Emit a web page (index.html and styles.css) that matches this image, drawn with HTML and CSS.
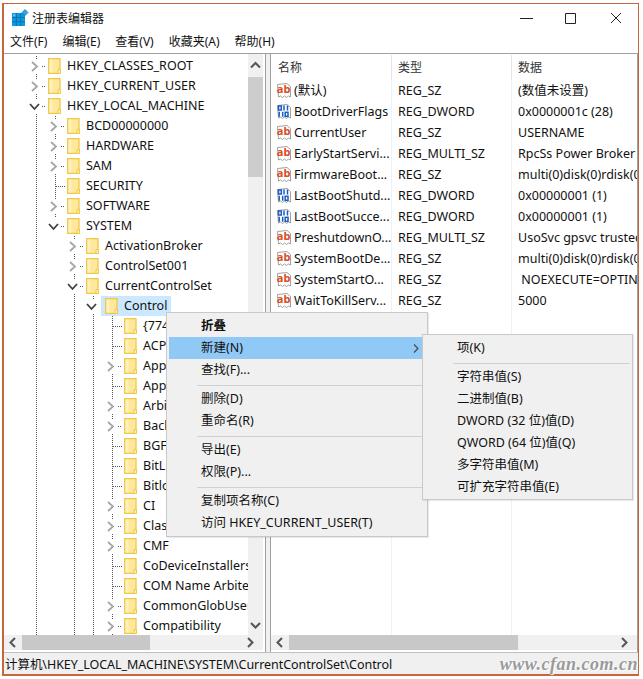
FILE: index.html
```html
<!DOCTYPE html>
<html lang="zh-CN">
<head>
<meta charset="utf-8">
<title>注册表编辑器</title>
<link rel="stylesheet" href="styles.css">
</head>
<body>
<svg class="defs" width="0" height="0" aria-hidden="true">
  <symbol id="right" viewBox="0 0 9 11"><path d="M2 1l5 4.500L2 10" fill="none" stroke="#a6a6a6" stroke-width="1.800"/></symbol>
  <symbol id="down" viewBox="0 0 11 9"><path d="M1 2l4.500 5L10 2" fill="none" stroke="#404040" stroke-width="1.800"/></symbol>
  <symbol id="folder" viewBox="0 0 13 16"><path d="M.7.700h11.300v14.600H.7z" fill="#ffe79c" stroke="#f0c848" stroke-width="1.300"/><path d="M1.500 1.500h3v13h-3z" fill="#fff0bd"/><path d="M10 11.500h2.500v4H10z" fill="#ffeeb0" stroke="#f0c848"/></symbol>
  <symbol id="ab" viewBox="0 0 16 17"><path d="M1.500 2.500L11 1.500l3.500 3V15l-2-1-2 1.500-2-1.500-2 1.500-2-1.500-2 1z" fill="#fff" stroke="#a0a0a0"/><text x=".8" y="10.800" class="abtext">ab</text></symbol>
  <symbol id="bin" viewBox="0 0 16 17"><path d="M1.500 2.500L11 1.500l3.500 3V15l-2-1-2 1.500-2-1.500-2 1.500-2-1.500-2 1z" fill="#fff" stroke="#a0a0a0"/><g fill="none" stroke="#1a5cc0" stroke-width="1.500"><rect x="2.500" y="3" width="2.800" height="4"/><path d="M8 2.500v5M11.500 2.500v5M3.200 8.800v5M6.700 8.800v5"/><rect x="9.200" y="9.300" width="2.800" height="4"/></g></symbol>
</svg>
<div class="window">
  <header class="titlebar">
    <svg class="appicon" width="18" height="18" viewBox="0 0 18 18"><path d="M1 4h13v13H1z" fill="#0a9be0"/><path d="M1 8.500h13M1 12.800h13M5.300 4v13M9.700 4v13" stroke="#0d6fae" stroke-width="1"/><path d="M2 5h2.500v2.500H2z" fill="#47c4f5"/><path d="M14 .5l3 3-3 3-3-3z" fill="#2aa7e6" stroke="#0d6fae" stroke-width=".7"/></svg>
    <span class="apptitle">注册表编辑器</span>
    <div class="caption">
      <svg class="capbtn" width="46" height="12" viewBox="0 0 46 12"><path d="M21 6.500h13" stroke="#222" stroke-width="1"/></svg>
      <svg class="capbtn" width="46" height="12" viewBox="0 0 46 12"><path d="M20.500 1.500h10v10h-10z" fill="none" stroke="#222" stroke-width="1"/></svg>
      <svg class="capbtn" width="46" height="12" viewBox="0 0 46 12"><path d="M20 1l10 10M30 1L20 11" fill="none" stroke="#222" stroke-width="1"/></svg>
    </div>
  </header>
  <nav class="menubar"><span>文件(F)</span><span>编辑(E)</span><span>查看(V)</span><span>收藏夹(A)</span><span>帮助(H)</span></nav>
  <main class="panes">
    <section class="treepane">
      <div class="treeview">
        <div class="tree">
          <div class="node"><i class="toggle line"><svg width="9" height="11"><use href="#right"/></svg><b class="hdots short"></b></i><svg class="fo" width="13" height="16"><use href="#folder"/></svg><span>HKEY_CLASSES_ROOT</span></div>
          <div class="node"><i class="toggle line"><svg width="9" height="11"><use href="#right"/></svg><b class="hdots short"></b></i><svg class="fo" width="13" height="16"><use href="#folder"/></svg><span>HKEY_CURRENT_USER</span></div>
          <div class="node"><i class="toggle line"><svg width="11" height="9"><use href="#down"/></svg><b class="hdots short"></b></i><svg class="fo" width="13" height="16"><use href="#folder"/></svg><span>HKEY_LOCAL_MACHINE</span></div>

          <div class="node"><i class="guide"></i><i class="toggle line"><svg width="9" height="11"><use href="#right"/></svg><b class="hdots short"></b></i><svg class="fo" width="13" height="16"><use href="#folder"/></svg><span>BCD00000000</span></div>
          <div class="node"><i class="guide"></i><i class="toggle line"><svg width="9" height="11"><use href="#right"/></svg><b class="hdots short"></b></i><svg class="fo" width="13" height="16"><use href="#folder"/></svg><span>HARDWARE</span></div>
          <div class="node"><i class="guide"></i><i class="toggle line"><svg width="9" height="11"><use href="#right"/></svg><b class="hdots short"></b></i><svg class="fo" width="13" height="16"><use href="#folder"/></svg><span>SAM</span></div>
          <div class="node"><i class="guide"></i><i class="toggle line"><b class="hdots"></b></i><svg class="fo" width="13" height="16"><use href="#folder"/></svg><span>SECURITY</span></div>
          <div class="node"><i class="guide"></i><i class="toggle line"><svg width="9" height="11"><use href="#right"/></svg><b class="hdots short"></b></i><svg class="fo" width="13" height="16"><use href="#folder"/></svg><span>SOFTWARE</span></div>
          <div class="node"><i class="guide"></i><i class="toggle line end"><svg width="11" height="9"><use href="#down"/></svg><b class="hdots short"></b></i><svg class="fo" width="13" height="16"><use href="#folder"/></svg><span>SYSTEM</span></div>

          <div class="node"><i class="guide"></i><i class="blank"></i><i class="toggle line"><svg width="9" height="11"><use href="#right"/></svg><b class="hdots short"></b></i><svg class="fo" width="13" height="16"><use href="#folder"/></svg><span>ActivationBroker</span></div>
          <div class="node"><i class="guide"></i><i class="blank"></i><i class="toggle line"><svg width="9" height="11"><use href="#right"/></svg><b class="hdots short"></b></i><svg class="fo" width="13" height="16"><use href="#folder"/></svg><span>ControlSet001</span></div>
          <div class="node"><i class="guide"></i><i class="blank"></i><i class="toggle line"><svg width="11" height="9"><use href="#down"/></svg><b class="hdots short"></b></i><svg class="fo" width="13" height="16"><use href="#folder"/></svg><span>CurrentControlSet</span></div>

          <div class="node"><i class="guide"></i><i class="blank"></i><i class="guide"></i><i class="toggle line"><svg width="11" height="9"><use href="#down"/></svg></i><span class="selected"><svg class="fo" width="13" height="16"><use href="#folder"/></svg><span>Control</span></span></div>

          <div class="node"><i class="guide"></i><i class="blank"></i><i class="guide"></i><i class="guide"></i><i class="toggle line"><b class="hdots"></b></i><svg class="fo" width="13" height="16"><use href="#folder"/></svg><span>{7746D80F-97E0-4E26-9543-26B41FC22F79}</span></div>
          <div class="node"><i class="guide"></i><i class="blank"></i><i class="guide"></i><i class="guide"></i><i class="toggle line"><b class="hdots"></b></i><svg class="fo" width="13" height="16"><use href="#folder"/></svg><span>ACPI</span></div>
          <div class="node"><i class="guide"></i><i class="blank"></i><i class="guide"></i><i class="guide"></i><i class="toggle line"><svg width="9" height="11"><use href="#right"/></svg><b class="hdots short"></b></i><svg class="fo" width="13" height="16"><use href="#folder"/></svg><span>AppID</span></div>
          <div class="node"><i class="guide"></i><i class="blank"></i><i class="guide"></i><i class="guide"></i><i class="toggle line"><b class="hdots"></b></i><svg class="fo" width="13" height="16"><use href="#folder"/></svg><span>AppReadiness</span></div>
          <div class="node"><i class="guide"></i><i class="blank"></i><i class="guide"></i><i class="guide"></i><i class="toggle line"><svg width="9" height="11"><use href="#right"/></svg><b class="hdots short"></b></i><svg class="fo" width="13" height="16"><use href="#folder"/></svg><span>Arbiters</span></div>
          <div class="node"><i class="guide"></i><i class="blank"></i><i class="guide"></i><i class="guide"></i><i class="toggle line"><svg width="9" height="11"><use href="#right"/></svg><b class="hdots short"></b></i><svg class="fo" width="13" height="16"><use href="#folder"/></svg><span>BackupRestore</span></div>
          <div class="node"><i class="guide"></i><i class="blank"></i><i class="guide"></i><i class="guide"></i><i class="toggle line"><b class="hdots"></b></i><svg class="fo" width="13" height="16"><use href="#folder"/></svg><span>BGFX</span></div>
          <div class="node"><i class="guide"></i><i class="blank"></i><i class="guide"></i><i class="guide"></i><i class="toggle line"><b class="hdots"></b></i><svg class="fo" width="13" height="16"><use href="#folder"/></svg><span>BitLocker</span></div>
          <div class="node"><i class="guide"></i><i class="blank"></i><i class="guide"></i><i class="guide"></i><i class="toggle line"><b class="hdots"></b></i><svg class="fo" width="13" height="16"><use href="#folder"/></svg><span>Bitlocker</span></div>
          <div class="node"><i class="guide"></i><i class="blank"></i><i class="guide"></i><i class="guide"></i><i class="toggle line"><svg width="9" height="11"><use href="#right"/></svg><b class="hdots short"></b></i><svg class="fo" width="13" height="16"><use href="#folder"/></svg><span>CI</span></div>
          <div class="node"><i class="guide"></i><i class="blank"></i><i class="guide"></i><i class="guide"></i><i class="toggle line"><svg width="9" height="11"><use href="#right"/></svg><b class="hdots short"></b></i><svg class="fo" width="13" height="16"><use href="#folder"/></svg><span>Class</span></div>
          <div class="node"><i class="guide"></i><i class="blank"></i><i class="guide"></i><i class="guide"></i><i class="toggle line"><svg width="9" height="11"><use href="#right"/></svg><b class="hdots short"></b></i><svg class="fo" width="13" height="16"><use href="#folder"/></svg><span>CMF</span></div>
          <div class="node"><i class="guide"></i><i class="blank"></i><i class="guide"></i><i class="guide"></i><i class="toggle line"><b class="hdots"></b></i><svg class="fo" width="13" height="16"><use href="#folder"/></svg><span>CoDeviceInstallers</span></div>
          <div class="node"><i class="guide"></i><i class="blank"></i><i class="guide"></i><i class="guide"></i><i class="toggle line"><b class="hdots"></b></i><svg class="fo" width="13" height="16"><use href="#folder"/></svg><span>COM Name Arbiter</span></div>
          <div class="node"><i class="guide"></i><i class="blank"></i><i class="guide"></i><i class="guide"></i><i class="toggle line"><svg width="9" height="11"><use href="#right"/></svg><b class="hdots short"></b></i><svg class="fo" width="13" height="16"><use href="#folder"/></svg><span>CommonGlobUserSettings</span></div>
          <div class="node"><i class="guide"></i><i class="blank"></i><i class="guide"></i><i class="guide"></i><i class="toggle line"><svg width="9" height="11"><use href="#right"/></svg><b class="hdots short"></b></i><svg class="fo" width="13" height="16"><use href="#folder"/></svg><span>Compatibility</span></div>
        </div>
        <div class="vscroll">
          <svg class="sbtn" width="15" height="23" viewBox="0 0 15 23"><path d="M3 13.500l4.500-4.500L12 13.500" fill="none" stroke="#555" stroke-width="2"/></svg>
          <div class="vthumb"></div>
          <div class="grow"></div>
          <svg class="sbtn" width="15" height="20" viewBox="0 0 15 20"><path d="M3 8l4.500 4.500L12 8" fill="none" stroke="#555" stroke-width="2"/></svg>
        </div>
      </div>
      <div class="hscroll">
        <svg width="18" height="15" viewBox="0 0 18 15"><path d="M11 3l-4.500 4.500L11 12" fill="none" stroke="#555" stroke-width="2"/></svg>
        <div class="hthumb tree-thumb"></div>
        <div class="grow"></div>
        <svg width="24" height="15" viewBox="0 0 24 15"><path d="M9 3l4.500 4.500L9 12" fill="none" stroke="#555" stroke-width="2"/></svg>
      </div>
    </section>
    <section class="listpane">
      <div class="list">
        <div class="row head"><span>名称</span><span>类型</span><span>数据</span></div>
        <div class="row"><span><svg width="16" height="17"><use href="#ab"/></svg><em>(默认)</em></span><span>REG_SZ</span><span>(数值未设置)</span></div>
        <div class="row"><span><svg width="16" height="17"><use href="#bin"/></svg><em>BootDriverFlags</em></span><span>REG_DWORD</span><span>0x0000001c (28)</span></div>
        <div class="row"><span><svg width="16" height="17"><use href="#ab"/></svg><em>CurrentUser</em></span><span>REG_SZ</span><span>USERNAME</span></div>
        <div class="row"><span><svg width="16" height="17"><use href="#ab"/></svg><em>EarlyStartServi...</em></span><span>REG_MULTI_SZ</span><span>RpcSs Power Broker</span></div>
        <div class="row"><span><svg width="16" height="17"><use href="#ab"/></svg><em>FirmwareBoot...</em></span><span>REG_SZ</span><span>multi(0)disk(0)rdisk(0)</span></div>
        <div class="row"><span><svg width="16" height="17"><use href="#bin"/></svg><em>LastBootShutd...</em></span><span>REG_DWORD</span><span>0x00000001 (1)</span></div>
        <div class="row"><span><svg width="16" height="17"><use href="#bin"/></svg><em>LastBootSucce...</em></span><span>REG_DWORD</span><span>0x00000001 (1)</span></div>
        <div class="row"><span><svg width="16" height="17"><use href="#ab"/></svg><em>PreshutdownO...</em></span><span>REG_MULTI_SZ</span><span>UsoSvc gpsvc trustedinstaller</span></div>
        <div class="row"><span><svg width="16" height="17"><use href="#ab"/></svg><em>SystemBootDe...</em></span><span>REG_SZ</span><span>multi(0)disk(0)rdisk(0)</span></div>
        <div class="row"><span><svg width="16" height="17"><use href="#ab"/></svg><em>SystemStartO...</em></span><span>REG_SZ</span><span> NOEXECUTE=OPTIN</span></div>
        <div class="row"><span><svg width="16" height="17"><use href="#ab"/></svg><em>WaitToKillServ...</em></span><span>REG_SZ</span><span>5000</span></div>
        <div class="row filler"><span></span><span></span><span></span></div>
      </div>
      <div class="hscroll list-scroll">
        <svg width="18" height="15" viewBox="0 0 18 15"><path d="M11 3l-4.500 4.500L11 12" fill="none" stroke="#555" stroke-width="2"/></svg>
        <div class="hthumb list-thumb"></div>
        <div class="grow"></div>
        <svg width="24" height="15" viewBox="0 0 24 15"><path d="M9 3l4.500 4.500L9 12" fill="none" stroke="#555" stroke-width="2"/></svg>
      </div>
    </section>
  </main>
  <footer class="status">计算机\HKEY_LOCAL_MACHINE\SYSTEM\CurrentControlSet\Control</footer>

  <div class="menu ctx">
    <div class="item strong">折叠</div>
    <div class="item active">新建(N)<svg class="arrow" width="6" height="9" viewBox="0 0 6 9"><path d="M1 .5l4 4-4 4" fill="none" stroke="#444" stroke-width="1.100"/></svg></div>
    <div class="item">查找(F)...</div>
    <div class="sep"></div>
    <div class="item">删除(D)</div>
    <div class="item">重命名(R)</div>
    <div class="sep"></div>
    <div class="item">导出(E)</div>
    <div class="item">权限(P)...</div>
    <div class="sep"></div>
    <div class="item">复制项名称(C)</div>
    <div class="item">访问 HKEY_CURRENT_USER(T)</div>
  </div>
  <div class="menu sub">
    <div class="item">项(K)</div>
    <div class="sep"></div>
    <div class="item">字符串值(S)</div>
    <div class="item">二进制值(B)</div>
    <div class="item">DWORD (32 位)值(D)</div>
    <div class="item">QWORD (64 位)值(Q)</div>
    <div class="item">多字符串值(M)</div>
    <div class="item">可扩充字符串值(E)</div>
  </div>
  <div class="watermark">www.cfan.com.cn</div>
  <div class="grip"></div>
</div>
</body>
</html>
```
FILE: styles.css
```css
* { box-sizing: border-box; }
html, body { margin: 0; padding: 0; background: #fff; }
body {
  width: 643px; height: 679px; overflow: hidden;
  padding: 3px 4px 3px 2px;
  font: 12.5px/20px "Noto Sans", "Noto Sans CJK SC", sans-serif;
  color: #111;
}
.defs { position: absolute; }
.grow { flex: 1; }

.window {
  position: relative;
  height: 673px;
  display: flex; flex-direction: column;
  background: #fff;
  border: 1px solid #c4673d;
  border-left-width: 2px;
  border-bottom-width: 2px;
}
.titlebar { height: 27px; display: flex; align-items: center; padding-left: 7px; padding-top: 3px; font-size: 12px; }
.appicon { flex: none; margin-top: -2px; }
.apptitle { margin-left: 3px; }
.caption { margin-left: auto; display: flex; margin-right: 1px; margin-top: -2px; }
.capbtn { display: block; }
.menubar { height: 22px; display: flex; gap: 15px; padding-left: 6px; align-items: center; font-size: 12px; }

.panes { flex: 1; min-height: 0; display: flex; background: #f0f0f0; border-top: 1px solid #a0a0a0; }
.treepane {
  width: 262px; display: flex; flex-direction: column;
  border-right: 1px solid #a0a0a0;
  background: #fff;
}
.treeview { flex: 1; min-height: 0; display: flex; }
.tree { flex: 1; min-width: 0; overflow: hidden; padding: 2px 0 0 22px; }
.node { height: 20px; display: flex; align-items: center; white-space: nowrap; }
.node > i { flex: none; width: 19px; height: 20px; display: block; position: relative; }
.guide, .toggle.line { background-image: linear-gradient(#555 50%, transparent 50%); background-size: 1px 2px; background-repeat: repeat-y; background-position: 10px 0; }
.toggle.end { background-size: 1px 2px; background-repeat: no-repeat; background-position: 10px 0; }
.toggle { display: flex !important; align-items: center; justify-content: center; padding-right: 2px; }
.toggle svg { position: relative; z-index: 1; background: #fff; display: block; box-shadow: 0 0 0 2px #fff; }
.hdots { position: absolute; left: 11px; top: 10px; width: 10px; height: 1px; background-image: linear-gradient(90deg, #555 50%, transparent 50%); background-size: 2px 1px; }
.hdots.short { left: 16px; width: 4px; }
.fo { flex: none; margin: 0 6px 0 3px; display: block; }
.selected { display: flex; align-items: center; height: 20px; background: #cce8ff; padding-right: 4px; margin-left: -1px; }
.selected .fo { margin-left: 4px; }

.vscroll { flex: none; width: 15px; display: flex; flex-direction: column; background: #f0f0f0; margin-right: 2px; }
.sbtn { display: block; flex: none; }
.vthumb { height: 100px; background: #cdcdcd; }
.hscroll { flex: none; height: 15px; margin-bottom: 2px; display: flex; background: #f0f0f0; margin-right: 2px; }
.hscroll svg { display: block; flex: none; }
.hthumb { background: #c8c8c8; }
.tree-thumb { width: 128px; }

.listpane {
  flex: 1; min-width: 0; display: flex; flex-direction: column; margin-left: 4px;
  border-left: 1px solid #a0a0a0; border-right: 1px solid #a0a0a0; background: #fff;
}
.list { flex: 1; min-height: 0; display: flex; flex-direction: column; overflow: hidden; }
.row { display: grid; grid-template-columns: 121px 120px 1fr; height: 21px; }
.row > span { display: flex; align-items: center; padding-left: 6px; white-space: pre; overflow: hidden; border-right: 1px solid #edf2f8; }
.row > span:first-child { padding-left: 5px; }
.row svg { flex: none; margin-right: 2px; }
.row em { font-style: normal; }
.row > span:last-child { border-right: 0; }
.head { height: 25px; margin-top: 1px; color: #333; font-size: 12px; }
.head > span { border-right-color: #e5e5e5; }
.head > span:first-child { padding-left: 7px; }
.filler { flex: 1; height: auto; }
.abtext { font: 700 11px "Noto Sans", sans-serif; fill: #d64f25; }
.list-scroll { margin-right: 0; }
.list-thumb { width: 229px; }

.status { height: 22px; flex: none; background: #f0f0f0; border-top: 1px solid #c0c0c0; padding: 1px 0 0 1px; line-height: 21px; letter-spacing: -.05px; }

.menu { position: absolute; background: #f0f0f0; border: 1px solid #c8c8c8; box-shadow: 1px 1px 1px rgba(0,0,0,.08); padding: 2px; }
.ctx { left: 162px; top: 308px; width: 262px; height: 225px; }
.sub { left: 418px; top: 330px; width: 211px; height: 166px; }
.item { height: 22px; line-height: 22px; position: relative; padding-left: 32px; }
.strong { font-weight: 700; }
.active { background: #90c8f6; }
.arrow { position: absolute; right: 6px; top: 7px; }
.sep { height: 1px; background: #d0d0d0; margin: 4px 0 2px 28px; }
.watermark {
  position: absolute; right: 0; bottom: -1px;
  font: italic 700 18px/22px "Liberation Serif", serif;
  color: #9a9a9a; letter-spacing: .5px;
  text-shadow: 0 0 2px #fff, 1px 1px 1px #fff;
}
.grip { position: absolute; right: 1px; bottom: 1px; width: 6px; height: 6px; background-image: radial-gradient(#999 40%, transparent 45%); background-size: 2px 2px; }
```
